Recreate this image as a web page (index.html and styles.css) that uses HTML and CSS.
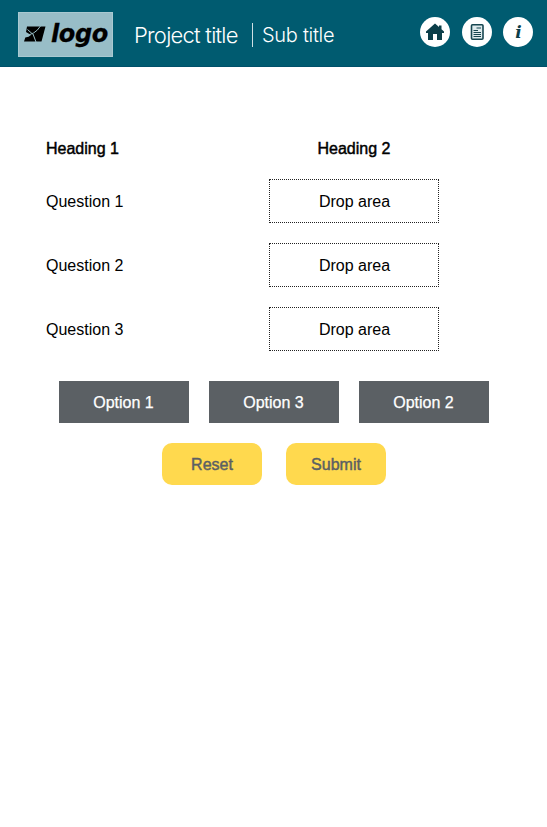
FILE: index.html
```html
<!DOCTYPE html>
<html lang="en">
<head>
<meta charset="utf-8">
<title>Project title</title>
<link rel="stylesheet" href="styles.css">
</head>
<body>
<header class="bar">
  <div class="logo">
    <svg class="mark" width="22" height="16" viewBox="0 0 22 16"><path d="M3 .5h18.500l-4 15H0l1.300-4Q5 11 7 9L2 6Z" fill="#000"/><path d="M.5 9.500Q11 9 16.500 0M3.500 3.500l5 4.500M9 8l3 8" fill="none" stroke="#98bdc7" stroke-width="1"/></svg>
    <span class="word">logo</span>
  </div>
  <div class="titles"><span class="project">Project title</span><span class="sub">Sub title</span></div>
  <nav class="nav">
    <a class="round"><svg width="30" height="30" viewBox="0 0 30 30"><path d="M15 6.500 6 14.500v1.500h2v7h5v-6h4v6h5v-7h2v-1.500l-2.500-2.300V8.500H19v1.600Z" fill="#0b3e49"/></svg></a>
    <a class="round"><svg width="30" height="30" viewBox="0 0 30 30"><rect x="9.500" y="7.700" width="11.500" height="14.600" rx="1" fill="#dfebed" stroke="#174650" stroke-width="1.600"/><path d="M14.500 11h4.500M11.500 13.500h4.500M11.500 15.500h7.500M11.500 17.500h7.500M11.500 19.500h7.500" stroke="#174650" stroke-width="1"/></svg></a>
    <a class="round info">i</a>
  </nav>
</header>
<main>
  <div class="grid">
    <h2 class="head">Heading 1</h2><h2 class="head center">Heading 2</h2>
    <div class="question">Question 1</div><div class="drop">Drop area</div>
    <div class="question">Question 2</div><div class="drop">Drop area</div>
    <div class="question">Question 3</div><div class="drop">Drop area</div>
  </div>
  <div class="options"><div class="option">Option 1</div><div class="option">Option 3</div><div class="option">Option 2</div></div>
  <div class="actions"><button class="btn">Reset</button><button class="btn">Submit</button></div>
</main>
</body>
</html>
```
FILE: styles.css
```css
* { box-sizing: border-box; }
body { margin: 0; background: #fff; color: #000; font: 16px/20px "Liberation Sans", Arial, sans-serif; }
.bar { height: 67px; background: #005b70; border-bottom: 1px solid #00506a; display: flex; align-items: flex-start; padding-left: 18px; padding-right: 14px; }
.logo { width: 95px; height: 45px; margin-top: 12px; background: #98bdc7; border: 1px solid #a9c9d1; display: flex; align-items: center; padding-left: 5px; }
.mark { flex: none; margin-top: -1px; }
.word { font: italic bold 24px/40px "DejaVu Sans", sans-serif; letter-spacing: -.4px; margin-left: 5px; margin-top: -1px; -webkit-text-stroke: .3px #000; }
.titles { display: flex; align-items: center; margin: 23px 0 0 21px; color: #fff; font-family: Inter, sans-serif; font-weight: 300; line-height: 24px; white-space: nowrap; }
.project { width: 119px; font-size: 22px; letter-spacing: -.75px; border-right: 1px solid #d0e0e4; }
.sub { font-size: 20px; letter-spacing: -.3px; padding-left: 9px; }
.nav { display: flex; gap: 12px; margin: 17px 0 0 auto; }
.round { width: 30px; height: 30px; border-radius: 50%; background: #fff; display: block; }
.round svg { display: block; }
.info { margin-left: -1px; padding-left: 1px; color: #0b3e49; text-align: center; font: italic bold 17px/30px "DejaVu Serif", serif; }
main { padding-top: 72px; }
.grid { display: grid; grid-template-columns: 223px 170px; row-gap: 20px; padding-left: 46px; align-items: center; }
.head { margin: 0; font-size: 16px; font-weight: normal; -webkit-text-stroke: .45px #000; }
.center { text-align: center; }
.question { padding-top: 2px; }
.drop { height: 44px; padding: 2px 0 0 1px; border: 1px dotted #222; display: flex; align-items: center; justify-content: center; }
.options { display: flex; justify-content: center; gap: 20px; margin-top: 30px; }
.option { width: 130px; height: 42px; background: #5b6064; color: #fff; text-align: center; line-height: 44px; -webkit-text-stroke: .25px #fff; }
.actions { display: flex; justify-content: center; gap: 24px; margin-top: 20px; }
.btn { width: 100px; height: 42px; border: 0; border-radius: 10px; background: #ffd94e; color: #5b6064; font: 16px "Liberation Sans", Arial, sans-serif; padding: 2px 0 0 1px; -webkit-text-stroke: .45px #5b6064; }
```
